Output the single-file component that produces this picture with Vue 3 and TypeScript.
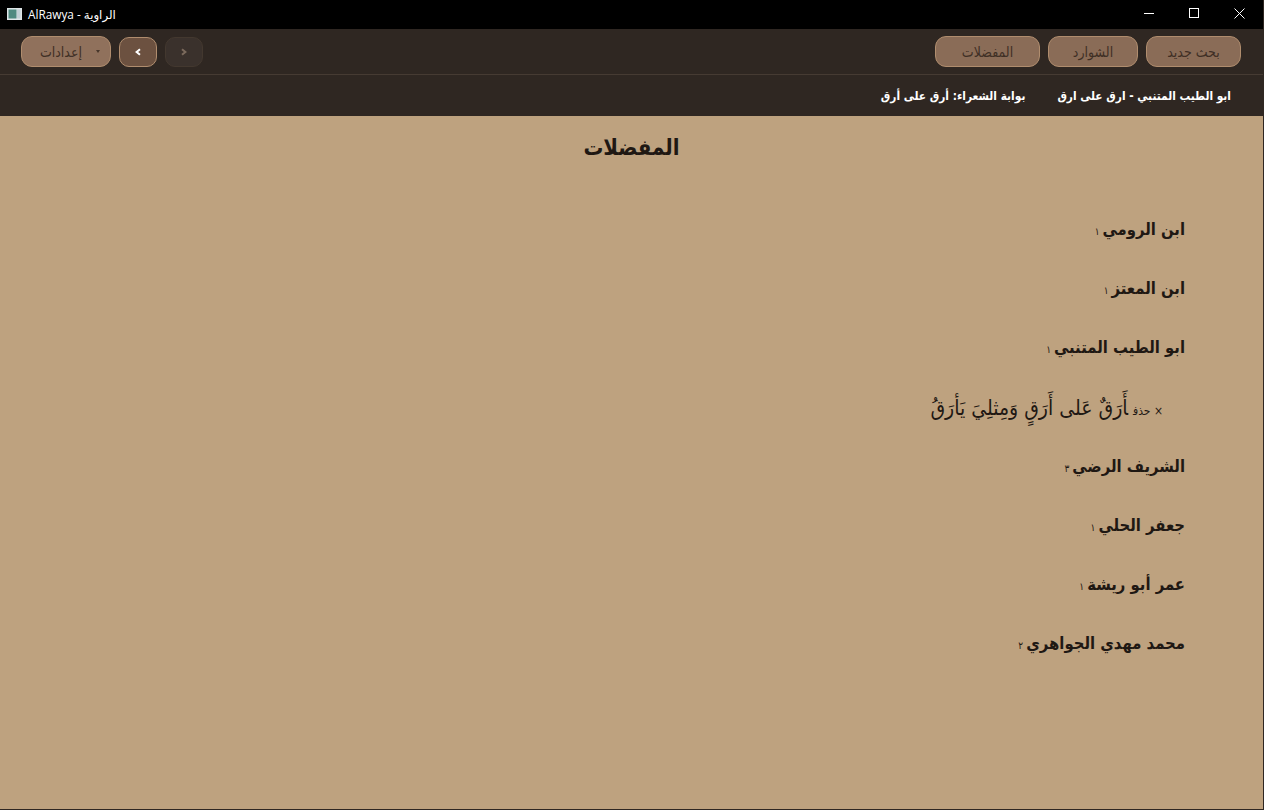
<script setup lang="ts">
interface Poet { name: string; count: string; fav?: string }
const poets: Poet[] = [
  { name: 'ابن الرومي', count: '١' },
  { name: 'ابن المعتز', count: '١' },
  { name: 'ابو الطيب المتنبي', count: '١', fav: 'أَرَقٌ عَلى أَرَقٍ وَمِثلِيَ يَأرَقُ' },
  { name: 'الشريف الرضي', count: '٣' },
  { name: 'جعفر الحلي', count: '١' },
  { name: 'عمر أبو ريشة', count: '١' },
  { name: 'محمد مهدي الجواهري', count: '٢' },
]
</script>

<template>
  <div class="window">
    <header class="titlebar">
      <div class="title">
        <svg class="appicon" width="15" height="12" viewBox="0 0 15 12">
          <rect width="15" height="12" fill="#dfe6e8" />
          <rect x="1.5" y="1.5" width="8" height="9" fill="#4f8a80" />
          <rect x="10" y="1.5" width="3.5" height="9" fill="#c3d0d6" />
        </svg>
        <span>AlRawya - الراوية</span>
      </div>
      <div class="winbtns">
        <svg width="11" height="11" viewBox="0 0 11 11"><path d="M0 5.5H10" stroke="#fff" /></svg>
        <svg width="11" height="11" viewBox="0 0 11 11"><rect x=".5" y=".5" width="9" height="9" fill="none" stroke="#fff" /></svg>
        <svg width="11" height="11" viewBox="0 0 11 11"><path d="M.5.5L10.5 10.5M10.5.5L.5 10.5" stroke="#fff" /></svg>
      </div>
    </header>
    <nav class="toolbar" dir="rtl">
      <div class="group">
        <button class="btn wide">بحث جديد</button>
        <button class="btn mid">الشوارد</button>
        <button class="btn fav">المفضلات</button>
      </div>
      <div class="group tools">
        <button class="nav" aria-label="السابق">
          <svg width="8" height="8" viewBox="0 0 8 8"><path d="M2 1.2L5.4 4L2 6.8" fill="none" stroke="#7b6a5c" stroke-width="2" /></svg>
        </button>
        <button class="nav active" aria-label="التالي">
          <svg width="8" height="8" viewBox="0 0 8 8"><path d="M6 1.2L2.6 4L6 6.8" fill="none" stroke="#fff" stroke-width="2" /></svg>
        </button>
        <button class="btn menu"><span class="caret"></span>إعدادات</button>
      </div>
    </nav>
    <div class="tabs" dir="rtl">
      <span>ابو الطيب المتنبي - ارق على ارق</span>
      <span>بوابة الشعراء: أرق على أرق</span>
    </div>
    <main class="content" dir="rtl">
      <h1>المفضلات</h1>
      <ul class="list">
        <template v-for="p in poets" :key="p.name">
          <li class="poet">{{ p.name }}<small>{{ p.count }}</small></li>
          <li v-if="p.fav" class="fav-row"><small>× حذف</small>{{ p.fav }}</li>
        </template>
      </ul>
    </main>
  </div>
</template>

<style>
body { margin: 0; background: #bea27f; }
</style>

<style scoped>
.window {
  width: 1264px;
  height: 810px;
  display: flex;
  flex-direction: column;
  overflow: hidden;
  font-family: "DejaVu Sans Condensed", "DejaVu Sans", "Noto Sans", sans-serif;
  font-stretch: condensed;
  box-sizing: border-box;
  border-bottom: 1px solid #2f2722;
  border-right: 1px solid #2f2722;
}
.titlebar {
  height: 29px;
  flex: none;
  box-sizing: border-box;
  padding-bottom: 2px;
  background: #000;
  color: #fff;
  display: flex;
  align-items: center;
  justify-content: space-between;
}
.title {
  display: flex;
  align-items: center;
  gap: 6px;
  padding-left: 7px;
  font: 11.8px "Open Sans", "DejaVu Sans", sans-serif;
}
.winbtns {
  display: flex;
  gap: 34px;
  padding-right: 18px;
  align-items: center;
}
.toolbar {
  height: 46px;
  flex: none;
  box-sizing: border-box;
  background: #2f2722;
  display: flex;
  justify-content: space-between;
  align-items: center;
  padding: 0 22px 0 21px;
  border-bottom: 1px solid #463b33;
}
.group { display: flex; gap: 8px; align-items: center; }
.btn {
  height: 31px;
  padding: 0;
  border-radius: 11px;
  border: 1px solid #b08d6e;
  background: #8a6c57;
  color: #3f2f25;
  font-family: inherit;
  font-stretch: condensed;
  font-size: 14px;
}
.wide { width: 95px; }
.mid { width: 90px; }
.fav { width: 105px; }
.menu {
  width: 90px;
  display: flex;
  align-items: center;
  gap: 14px;
  padding-right: 10px;
  box-sizing: border-box;
  background: #90715c;
}
.caret {
  border-left: 2.5px solid transparent;
  border-right: 2.5px solid transparent;
  border-top: 3px solid #47362b;
}
.nav {
  width: 38px;
  height: 30px;
  padding: 0;
  border-radius: 10px;
  background: #3a312c;
  border: 1px solid #43382f;
  display: flex;
  align-items: center;
  justify-content: center;
}
.nav.active { background: #6c5140; border-color: #b08d6e; }
.tabs {
  height: 41px;
  flex: none;
  box-sizing: border-box;
  background: #2f2722;
  color: #fff;
  display: flex;
  align-items: center;
  gap: 32px;
  padding: 0 32px;
  font-size: 11.8px;
  font-weight: 700;
}
.content {
  flex: 1;
  background: #bea27f;
  color: #1f1813;
}
h1 {
  margin: 0;
  padding-top: 17px;
  text-align: center;
  font-size: 22px;
  line-height: 30px;
  font-weight: 700;
}
.list {
  list-style: none;
  margin: 52px 0 0;
  padding: 0 78px 0 0;
}
.poet, .fav-row {
  height: 59.2px;
  line-height: 30px;
  font-size: 16.5px;
  font-weight: 700;
}
.poet small { font-size: 10px; font-weight: 400; margin-right: 3px; }
.fav-row {
  font-size: 21px;
  font-weight: 400;
  padding-right: 22px;
}
.fav-row small { font-size: 12px; font-weight: 400; margin-left: 5px; }
</style>
